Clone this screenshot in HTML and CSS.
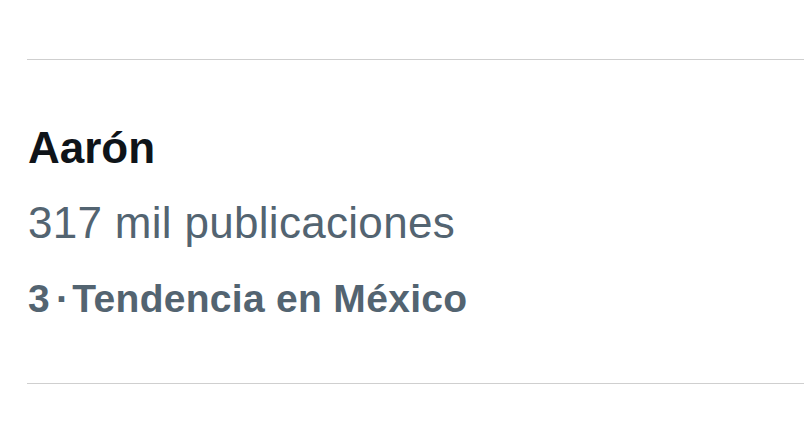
FILE: index.html
```html
<!DOCTYPE html>
<html>
  <head>
    <title>Tendencias</title>
    <link rel="stylesheet" href="styles.css">
  </head>
  <body>
    <div class="trend-list">
      <div class="trend">
        <div class="trend-name">Aarón</div>
        <div class="trend-count">317 mil publicaciones</div>
        <div class="trend-meta">3<span class="sep">·</span>Tendencia en México</div>
      </div>
    </div>
  </body>
</html>
```

FILE: styles.css
```css
body {
    margin: 0;
    background-color: #ffffff;
    font-family: "Liberation Sans", Arial, sans-serif;
}
.trend-list {
    margin-top: 59px;
    margin-left: 27px;
}
.trend {
    border-top: 1px solid #cfcfcf;
    border-bottom: 1px solid #cfcfcf;
    padding-top: 62px;
    padding-bottom: 61px;
}
.trend-name {
    color: #0f1419;
    font-size: 44px;
    font-weight: bold;
    line-height: 52px;
    padding-left: 1px;
}
.trend-count {
    margin-top: 23px;
    color: #536471;
    font-size: 44px;
    letter-spacing: 0.3px;
    line-height: 52px;
    padding-left: 1px;
}
.trend-meta {
    margin-top: 27px;
    color: #536471;
    font-size: 39px;
    font-weight: bold;
    letter-spacing: 0.3px;
    line-height: 46px;
    padding-left: 1px;
}
.trend-meta .sep {
    margin: 0 3px 0 6px;
}
```
